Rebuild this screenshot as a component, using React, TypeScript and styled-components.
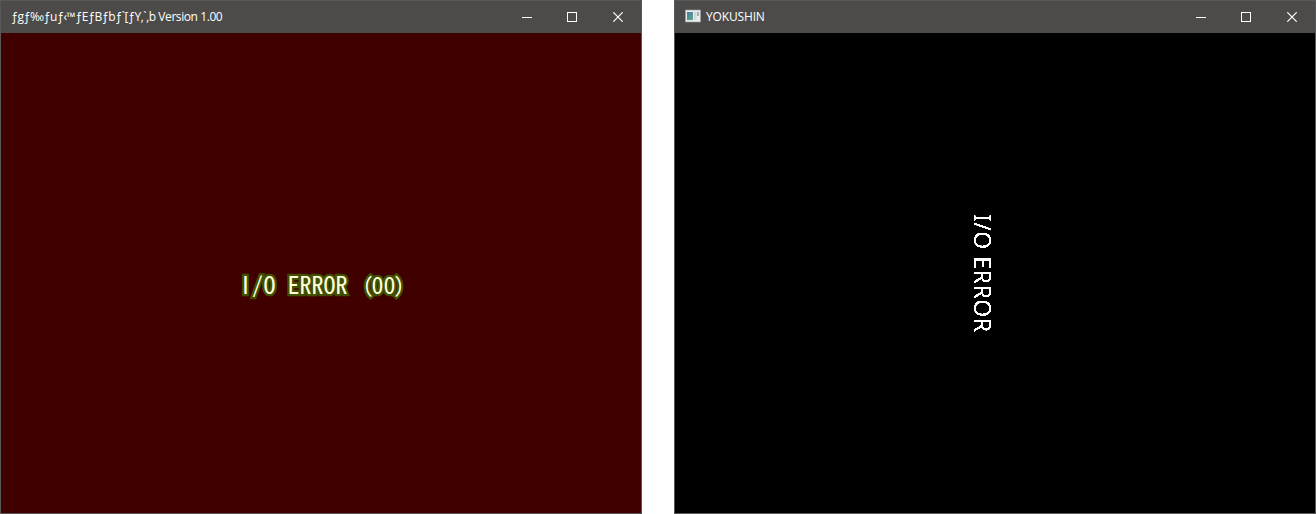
import React from "react";
import styled, { createGlobalStyle } from "styled-components";

const GlobalStyle = createGlobalStyle`
  * { box-sizing: border-box; }
  body { margin: 0; background: #fff; }
`;

const Desktop = styled.main`
  display: flex;
  justify-content: space-between;
  width: 1316px;
  height: 514px;
`;

const Window = styled.section`
  display: flex;
  flex-direction: column;
  width: 642px;
  height: 514px;
  border: 1px solid #585858;
`;

const TitleBar = styled.header`
  display: flex;
  align-items: center;
  flex: 0 0 32px;
  padding-left: 10px;
  background: #4c4b49;
  color: #fff;
`;

const AppIcon = styled.svg`
  display: block;
  flex: none;
  width: 16px;
  height: 16px;
  margin: -2px 5px 0 0;
`;

const Title = styled.h1<{ $spacing: number }>`
  flex: 1;
  margin: 0;
  font: 400 12px/16px "Open Sans", "Noto Sans", sans-serif;
  letter-spacing: ${(p) => p.$spacing}px;
  white-space: nowrap;
`;

const Controls = styled.div`
  display: flex;
  height: 100%;
`;

const ControlButton = styled.button<{ $nudge?: number }>`
  display: flex;
  align-items: center;
  justify-content: center;
  width: 46px;
  height: 31px;
  padding: 0 0 0 ${(p) => p.$nudge ?? 0}px;
  border: 0;
  background: transparent;
  color: #fff;

  svg { display: block; }
`;

const Screen = styled.div<{ $color: string }>`
  flex: 1;
  display: flex;
  align-items: center;
  justify-content: center;
  background: ${(p) => p.$color};
`;

const GlowMessage = styled.p`
  margin: 22px 0 0 5px;
  font: 400 24px/32px "Noto Sans CJK JP", monospace;
  font-feature-settings: "hwid";
  color: #ffffdc;
  white-space: pre;
  -webkit-text-stroke: 4.6px #404f00;
  paint-order: stroke fill;
`;

const PlainStem = styled.span`
  display: inline-block;
  width: 12px;
  text-align: center;
  font-family: "Liberation Sans", sans-serif;
  font-size: 25px;
  line-height: 1;
`;

const Slash = styled.span`
  display: inline-block;
  width: 12px;
  text-align: center;
  font-size: 22px;
  line-height: 1;
  vertical-align: 1px;
`;

const Paren = styled.span<{ $side: "left" | "right" }>`
  display: inline-block;
  width: 14px;
  margin-${(p) => (p.$side === "left" ? "right" : "left")}: -2px;
  text-align: ${(p) => (p.$side === "left" ? "right" : "left")};
  font-size: 21px;
  line-height: 1;
  vertical-align: 1px;
`;

const VerticalMessage = styled.p`
  margin: 0 0 0 -25px;
  font: 400 23px/32px "Noto Sans", sans-serif;
  letter-spacing: 0.5px;
  color: #fff;
  writing-mode: vertical-rl;
  text-orientation: sideways;
  white-space: pre;
  filter: url(#hard-edges);
`;

const FilterDefs = styled.svg`
  position: absolute;
  width: 0;
  height: 0;
`;

const WindowControls = () => (
  <Controls>
    <ControlButton aria-label="Minimize" $nudge={2}>
      <svg width="10" height="10" shapeRendering="crispEdges">
        <path d="M0 5.5H10" stroke="currentColor" />
      </svg>
    </ControlButton>
    <ControlButton aria-label="Maximize">
      <svg width="10" height="10" shapeRendering="crispEdges">
        <rect x="0.5" y="0.5" width="9" height="9" fill="none" stroke="currentColor" />
      </svg>
    </ControlButton>
    <ControlButton aria-label="Close">
      <svg width="10" height="10">
        <path d="M0.3 0.3L9.7 9.7M9.7 0.3L0.3 9.7" stroke="currentColor" strokeWidth="1.2" />
      </svg>
    </ControlButton>
  </Controls>
);

const ProgramIcon = () => (
  <AppIcon viewBox="0 0 16 16">
    <defs>
      <linearGradient id="pane" x1="0" y1="0" x2="1" y2="1">
        <stop offset="0" stopColor="#4a78ad" />
        <stop offset="1" stopColor="#5cab7c" />
      </linearGradient>
    </defs>
    <rect x="0.5" y="2" width="15" height="12" fill="#e9ebee" stroke="#9b9fa5" strokeWidth="0.7" />
    <rect x="2" y="4" width="6" height="8" fill="url(#pane)" />
    <rect x="9" y="4" width="2.5" height="8" fill="#d5d7da" />
    <rect x="12" y="4" width="2" height="4" fill="#8dbba8" />
  </AppIcon>
);

export default function App() {
  return (
    <>
      <GlobalStyle />
      <FilterDefs aria-hidden="true">
        <filter id="hard-edges" colorInterpolationFilters="sRGB">
          <feComponentTransfer>
            <feFuncA type="linear" slope="8" intercept="-3" />
          </feComponentTransfer>
        </filter>
      </FilterDefs>
      <Desktop>
        <Window>
          <TitleBar>
            <Title $spacing={-0.42}>ƒgƒ‰ƒuƒ‹™ƒEƒBƒbƒ`[ƒY‚`‚b Version 1.00</Title>
            <WindowControls />
          </TitleBar>
          <Screen $color="#400000">
            <GlowMessage>
              <PlainStem>I</PlainStem><Slash>/</Slash>O ERROR <Paren $side="left">(</Paren>00<Paren $side="right">)</Paren>
            </GlowMessage>
          </Screen>
        </Window>
        <Window>
          <TitleBar>
            <ProgramIcon />
            <Title $spacing={-0.15}>YOKUSHIN</Title>
            <WindowControls />
          </TitleBar>
          <Screen $color="#000000">
            <VerticalMessage>I/O ERROR</VerticalMessage>
          </Screen>
        </Window>
      </Desktop>
    </>
  );
}
